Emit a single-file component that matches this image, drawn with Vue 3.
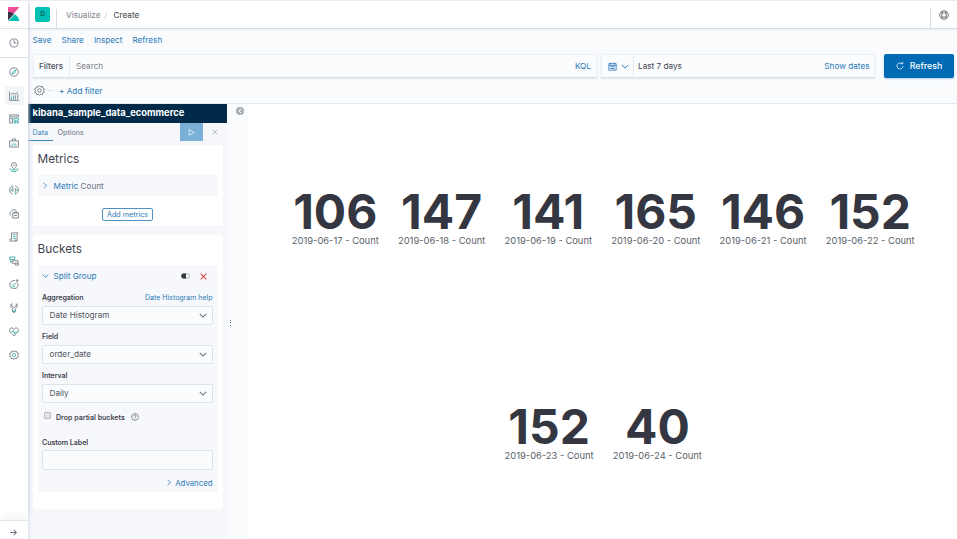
<script setup>
const nav = [
  { g: 'M8 1.2a6.8 6.8 0 1 0 0 13.6A6.8 6.8 0 0 0 8 1.2z', t: 'M11.4 4.6 9.4 9.2 4.6 11.4 6.7 6.8z' },
  { g: 'M1 1v14h14.500M10 14V7M14 14V5M3.500 5.500 7 3.500l3.500 1.500L14 1.500', t: 'M4 14V9M7 14V7', active: true },
  { g: 'M1 1.5h14v3H1zM1 7h4.5v7.5H1z', t: 'M8 7h7v3H8zM8 12h3v2.5H8zM13 12h2v2.5h-2z' },
  { g: 'M1 4.5h14v10H1zM5.5 4.5V1.5h5v3', t: 'M5 12.5V9M8 12.5V7.5M11 12.5V9' },
  { g: 'M8 11C5.500 8.500 4 7 4 5a4 4 0 1 1 8 0c0 2-1.500 3.500-4 6zM6.500 5h3', t: 'M3.500 9.500 1.500 12l3 3h7l3-3-2-2.500M4 12.500h8' },
  { g: 'M6 1.500C3 2 1 5 1 8s2 6 5 6.500M10 14.500c3-.5 5-3.500 5-6.500s-2-6-5-6.500M6 5v6M10 5v6', t: 'M6 1.500V5M10 11v3.500M3.500 6v4M12.500 6v4' },
  { g: 'M3 10.500A4 4 0 0 1 3.500 4 4.500 4.500 0 0 1 12 4M6 6.500h9v8H6zM8 6.500V5h5v1.500M8 10.500h5', t: 'M3 12.500h1' },
  { g: 'M4 1.500h10.500M4 1.500v10H1.500v3h9.500v-3M13 1.500v12c0 1.500-2 1.500-2 0', t: 'M6.500 4.500h4M6.500 7.500h4M6.500 10.500h4' },
  { g: 'M5 7.500h9.500v4H5zM10 11.500v3h5v-3', t: 'M1 1.500h8.500v4H1zM2.500 5.500v4H5' },
  { g: 'M14.500 7.500a6.700 6.700 0 1 1-5-5M13 7V1M10.700 3.300 13 1l2.300 2.300', t: 'M4.500 8 7 10.500 11 6M4 12.500h6' },
  { g: 'M4.500 1C2 3 2 7 6 9.500v4c0 2 4 2 4 0v-4C14 7 14 3 11.500 1v4L8 7.500 4.500 5z', t: 'M6 11v3h4v-3' },
  { g: 'M2 8C-.5 5 1.500 1.500 4.500 1.500c2 0 3 1.500 3.500 2 .5-.5 1.500-2 3.500-2C14.500 1.500 16.500 5 14 8M4 10.500l4 4 4-4', t: 'M1 8.500h4L7 5.500l2 6 1.500-3H15' },
  { g: 'M8 1l1.700 1.600 2.400-.5.6 2.300 2.200 1L14 8l.9 2.600-2.200 1-.6 2.300-2.400-.5L8 15l-1.700-1.600-2.400.5-.6-2.300-2.200-1L2 8l-.9-2.600 2.200-1 .6-2.300 2.400.5z', t: 'M8 5.500a2.500 2.500 0 1 0 0 5 2.500 2.500 0 0 0 0-5z' },
]
const menu = ['Save', 'Share', 'Inspect', 'Refresh']
const selects = [
  { label: 'Aggregation', value: 'Date Histogram', help: 'Date Histogram help' },
  { label: 'Field', value: 'order_date' },
  { label: 'Interval', value: 'Daily' },
]
const rows = [
  [
    { n: 106, d: '2019-06-17' },
    { n: 147, d: '2019-06-18' },
    { n: 141, d: '2019-06-19' },
    { n: 165, d: '2019-06-20' },
    { n: 146, d: '2019-06-21' },
    { n: 152, d: '2019-06-22' },
  ],
  [
    { n: 152, d: '2019-06-23' },
    { n: 40, d: '2019-06-24' },
  ],
]
</script>

<template>
  <div class="app">
    <aside class="side">
      <div class="logo">
        <svg width="12" height="14" viewBox="0 0 12 14">
          <path d="M0 0h11.500L0 13z" fill="#f04e98" />
          <path d="M0 5c2.200 0 4.300.6 6 1.700L0 13.500z" fill="#343741" />
          <path d="M6.500 7.200c2.600 1.500 4.400 3.900 5 6.800H.5z" fill="#00bfb3" />
        </svg>
      </div>
      <div class="recent">
        <svg class="ico" viewBox="0 0 16 16"><circle cx="8" cy="8" r="6.500" /><path d="M8 3.500V8h4" /></svg>
      </div>
      <nav class="nav">
        <div v-for="(i, k) in nav" :key="k" class="item">
          <span class="tile" :class="{ active: i.active }">
            <svg class="ico" viewBox="0 0 16 16"><path :d="i.g" /><path class="teal" :d="i.t" /></svg>
          </span>
        </div>
      </nav>
      <div class="expand">
        <svg class="ico" viewBox="0 0 16 16"><path d="M2 8h11M8.500 3.500 13 8l-4.500 4.500" /></svg>
      </div>
    </aside>

    <div class="page">
      <header class="head">
        <span class="space">D</span>
        <span class="rule"></span>
        <span class="crumb">Visualize</span>
        <span class="slash">/</span>
        <span class="crumb now">Create</span>
        <span class="rule right"></span>
        <svg class="helpicon" viewBox="0 0 16 16"><circle cx="8" cy="8" r="6.800" /><rect x="4.500" y="4.500" width="7" height="7" rx="2" /><path d="M5 2.500v3M11 2.500v3M5 10.500v3M11 10.500v3" /></svg>
      </header>

      <section class="query">
        <div class="menu"><a v-for="m in menu" :key="m">{{ m }}</a></div>
        <div class="bar">
          <div class="search">
            <span class="filters">Filters</span>
            <span class="ph">Search</span>
            <span class="kql">KQL</span>
          </div>
          <div class="dates">
            <span class="cal">
              <svg class="calico" viewBox="0 0 16 16"><path d="M1.500 3h13v11.500h-13zM1.500 6h13M4.500 1v3M11.500 1v3M4 8.500h8M4 11.500h8" /></svg>
              <svg class="chev" viewBox="0 0 10 6"><path d="M1 1l4 4 4-4" /></svg>
            </span>
            <span class="range">Last 7 days</span>
            <span class="show">Show dates</span>
          </div>
          <button class="refresh">
            <svg viewBox="0 0 16 16"><path d="M12 3.500A6 6 0 1 0 14 8M9 3.500h4.500V0" /></svg>
            <span>Refresh</span>
          </button>
        </div>
        <div class="filterrow">
          <svg class="gear" viewBox="0 0 16 16"><path :d="nav[12].g" /><circle cx="8" cy="8" r="2.500" /></svg>
          <span class="dash"></span>
          <a>+ Add filter</a>
        </div>
      </section>

      <div class="work">
        <section class="editor">
          <div class="title">kibana_sample_data_ecommerce</div>
          <div class="tabs">
            <span class="tab on">Data</span>
            <span class="tab">Options</span>
            <span class="play"><svg viewBox="0 0 10 10"><path d="M1.500 1v8L9 5z" /></svg></span>
            <svg class="close" viewBox="0 0 10 10"><path d="M1 1l8 8M9 1l-8 8" /></svg>
          </div>
          <div class="card metrics">
            <h2>Metrics</h2>
            <div class="metric">
              <svg class="right-chev" viewBox="0 0 6 10"><path d="M1 1l4 4-4 4" /></svg>
              <span><b>Metric</b> Count</span>
            </div>
            <button class="add">Add metrics</button>
          </div>
          <div class="card buckets">
            <h2>Buckets</h2>
            <div class="group">
              <div class="ghead">
                <svg class="chev" viewBox="0 0 10 6"><path d="M1 1l4 4 4-4" /></svg>
                <span class="gname">Split Group</span>
                <span class="tools">
                  <svg class="toggle" viewBox="0 0 16 10"><rect x="1" y="1" width="14" height="8" rx="4" fill="#fff" stroke="#69707d" /><path d="M9 .5H5a4.500 4.500 0 0 0 0 9h4z" fill="#343741" /></svg>
                  <svg class="remove" viewBox="0 0 10 10"><path d="M1 1l8 8M9 1l-8 8" /></svg>
                </span>
              </div>
              <div v-for="s in selects" :key="s.label" class="field">
                <div class="lab"><span>{{ s.label }}</span><a v-if="s.help">{{ s.help }}</a></div>
                <div class="select"><span>{{ s.value }}</span><svg class="chev grey" viewBox="0 0 10 6"><path d="M1 1l4 4 4-4" /></svg></div>
              </div>
              <div class="drop">
                <span class="check"></span>
                <span>Drop partial buckets</span>
                <svg viewBox="0 0 16 16"><circle cx="8" cy="8" r="6.800" /><path d="M5.800 6.500c0-3 4.400-3 4.400-.3C10.200 8 8 7.800 8 10M8 11.300v1.300" /></svg>
              </div>
              <div class="lab custom"><span>Custom Label</span></div>
              <div class="input"></div>
              <div class="adv"><svg class="right-chev" viewBox="0 0 6 10"><path d="M1 1l4 4-4 4" /></svg><span>Advanced</span></div>
            </div>
          </div>
        </section>
        <div class="gutter">
          <svg class="collapse" viewBox="0 0 16 16"><circle cx="8" cy="8" r="8" fill="#a9adb5" /><path d="M10 4 6 8l4 4" fill="none" stroke="#fff" stroke-width="2" /></svg>
          <span class="grip"><i></i><i></i><i></i></span>
        </div>
        <main class="vis">
          <div v-for="(r, k) in rows" :key="k" class="row">
            <div v-for="m in r" :key="m.d" class="num">
              <strong>{{ m.n }}</strong>
              <span>{{ m.d }} - Count</span>
            </div>
          </div>
        </main>
      </div>
    </div>
  </div>
</template>

<style>
body { background: #fff; overflow: hidden; }
</style>

<style scoped>
* { box-sizing: border-box; }
.app { display: flex; width: 957px; height: 539px; font-family: Inter, sans-serif; font-size: 8.200px; color: #3f434d; border-top: 1px solid #ebecee; overflow: hidden; }
svg { fill: none; stroke: #69707d; flex: none; display: block; }
a { color: #2a78b8; }
button { font: inherit; padding: 0; }
.side { width: 28px; flex: none; display: flex; flex-direction: column; background: #fff; box-shadow: 1px 0 3px #c8d0de; z-index: 1; }
.logo { height: 28px; padding: 6px 0 0 8px; border-bottom: 1px solid #dfe3eb; }
.logo svg { stroke: none; }
.recent { height: 29px; padding: 9px 0 0 8.500px; border-bottom: 1px solid #d9dee8; }
.ico { width: 10px; height: 10px; stroke-width: 1.300; }
.teal { stroke: #35aaa2; }
.nav { flex: 1; padding-top: 2.500px; }
.item { height: 23.580px; display: flex; align-items: center; justify-content: center; }
.tile { width: 19px; height: 19px; border-radius: 2px; display: flex; align-items: center; justify-content: center; }
.tile.active { background: #f3f5f9; }
.expand { height: 19px; padding: 7px 0 0 9px; border-top: 1px solid #e3e7ee; box-shadow: 0 -5px 8px #f5f6f9; }
.expand .ico { width: 9px; height: 9px; stroke-width: 1.800; }

.page { flex: 1; min-width: 0; display: flex; flex-direction: column; }
.head { height: 28px; flex: none; display: flex; align-items: center; border-bottom: 1px solid #d5dbe6; box-shadow: 0 1px 2px #e3e8f0; padding: 0 8px 0 7px; background: #fff; position: relative; }
.space { width: 15px; height: 15px; border-radius: 2px; background: #00bfb3; color: #075d5d; font-size: 6.500px; font-weight: 600; text-align: center; line-height: 14px; }
.rule { width: 1px; height: 19px; background: #d5dbe6; margin: 8px 9px 0 6px; }
.rule.right { margin: 8px 8px 0 auto; }
.crumb { color: #7b818c; }
.crumb.now { color: #3f434d; }
.slash { color: #c4c9d3; margin: 0 6px 0 4px; }
.helpicon { width: 10px; height: 10px; stroke-width: 1.300; stroke: #4b505b; }

.query { height: 75px; flex: none; background: #fafbfd; border-bottom: 1px solid #e4e8f0; padding: 0 3px 0 4.500px; }
.menu { height: 25px; display: flex; gap: 10px; line-height: 23.500px; }
.bar { height: 24px; display: flex; }
.search, .dates { height: 24px; display: flex; align-items: center; background: #fbfcfd; border: 1px solid #edf0f5; border-bottom-color: #d8dde7; box-shadow: 0 1px 2px #e2e6ee; }
.search { width: 564.500px; margin-right: 4px; }
.filters { width: 36px; line-height: 22px; text-align: center; font-weight: 500; border-right: 1px solid #e7eaf1; color: #4a4f5a; }
.ph { margin-left: 6.500px; color: #7b818c; }
.kql { margin-left: auto; margin-right: 5px; color: #2a78b8; }
.dates { width: 274px; margin-right: 9px; }
.cal { width: 31.500px; height: 22px; display: flex; align-items: center; gap: 4px; padding-left: 5.500px; border-right: 1px solid #e7eaf1; }
.calico { width: 9px; height: 9px; stroke: #2a78b8; stroke-width: 1.500; }
.chev { width: 8px; height: 5px; stroke: #2a78b8; stroke-width: 1.200; }
.chev.grey { stroke: #69707d; stroke-width: 1.300; }
.range { margin-left: 4.500px; }
.show { margin-left: auto; margin-right: 4.500px; color: #2a78b8; }
.refresh { width: 70px; height: 24px; background: #006bb4; border: 0; border-radius: 2px; color: #fff; font-size: 8.800px; font-weight: 500; display: flex; align-items: center; justify-content: center; gap: 6px; box-shadow: 0 1px 2px #b4cce3; line-height: 22px; padding-bottom: 1px; }
.refresh svg { width: 8px; height: 8px; stroke: #fff; stroke-width: 1.500; }
.filterrow { display: flex; align-items: center; height: 25px; padding-left: 1.500px; }
.gear { width: 11px; height: 11px; stroke-width: 1.300; }
.dash { width: 6px; height: 1px; background: #e1e5ed; margin: 0 5px 0 3px; }

.work { flex: 1; min-height: 0; display: flex; }
.editor { width: 199px; flex: none; background: #f5f7fb; }
.title { height: 19px; background: #002a48; color: #fff; font-weight: 700; font-size: 9.400px; line-height: 18.500px; padding-left: 4.500px; }
.tabs { height: 18px; display: flex; align-items: stretch; font-size: 7.200px; color: #69707d; line-height: 19px; }
.tab { padding: 0 4.500px; }
.tab.on { color: #3a84be; box-shadow: inset 0 -1px #3a84be; width: 25px; }
.play { margin-left: auto; width: 23px; background: #7aafd6; display: flex; align-items: center; justify-content: center; }
.play svg { width: 7px; height: 7px; stroke: #fff; }
.close { width: 6px; height: 6px; margin: 6px 9px 0; stroke: #9aa0ab; stroke-width: 1.200; }
.card { width: 190px; margin-left: 4.500px; background: #fff; border-radius: 2px; padding: 0 5px; box-shadow: 0 0 2px #eef1f6; }
.metrics { margin-top: 4px; height: 81px; }
.buckets { margin-top: 9px; height: 273.500px; }
h2 { margin: 0; font-size: 11.800px; font-weight: 400; line-height: 28px; height: 30px; }
.metric { height: 21px; background: #f7f8fb; display: flex; align-items: center; gap: 6.500px; padding: 0 0 0 5.500px; color: #69707d; border-radius: 2px; }
.metric b { font-weight: 400; color: #2a78b8; }
.right-chev { width: 4px; height: 7px; stroke: #2a78b8; stroke-width: 1.200; }
.add { display: block; width: 51px; height: 13px; margin: 12px auto 0; background: #fff; border: 1px solid #4e92c6; border-radius: 2px; color: #2a78b8; font-size: 7.200px; line-height: 12px; }
.group { height: 227px; background: #f7f8fb; padding: 0 5px 0 4.500px; border-radius: 2px; }
.ghead { height: 22px; display: flex; align-items: center; color: #2a78b8; }
.ghead .chev { width: 7px; height: 4px; }
.gname { margin-left: 4.500px; }
.tools { margin-left: auto; display: flex; align-items: center; gap: 10px; padding-right: 6px; }
.toggle { width: 9px; height: 6px; stroke: none; }
.remove, .remove path { width: 7px; height: 7px; stroke: #dc4a46; stroke-width: 1.500; }
.field { height: 39px; }
.lab { height: 19px; display: flex; justify-content: space-between; font-size: 7.050px; font-weight: 600; line-height: 21px; letter-spacing: -0.050px; }
.lab a { font-weight: 400; font-size: 7px; letter-spacing: 0; }
.select { height: 19px; border: 1px solid #dde2ec; background: #fbfcfd; border-radius: 2px; padding: 0 5px 0 6.500px; display: flex; align-items: center; justify-content: space-between; color: #50555f; line-height: 16px; }
.select span { padding-bottom: 1px; }
.drop { display: flex; align-items: center; height: 26px; font-size: 7.050px; font-weight: 600; padding-left: 2px; }
.check { width: 7px; height: 7px; border: 1px solid #b8bbc1; background: #e3e4e6; border-radius: 1px; margin: -3px 5px 0 0; }
.drop svg { width: 8px; height: 8px; stroke-width: 1.500; margin-left: 6px; }
.custom { margin-top: 3px; height: 17px; line-height: 19px; }
.input { height: 20px; border: 1px solid #dde2ec; background: #fbfcfd; border-radius: 2px; }
.adv { display: flex; justify-content: flex-end; align-items: center; gap: 4px; height: 25px; color: #2a78b8; font-size: 7.800px; }
.gutter { width: 21px; flex: none; background: #fafbfd; display: flex; flex-direction: column; }
.collapse { width: 8px; height: 8px; margin: 3px 0 0 9px; stroke: none; }
.grip { display: flex; flex-direction: column; gap: 1.500px; margin: 204.500px 0 0 2.500px; }
.grip i { width: 1px; height: 1px; background: #69707d; }
.vis { flex: 1; padding-top: 83px; display: flex; flex-direction: column; background: #fff; }
.row { display: flex; flex: none; justify-content: center; gap: 19.200px; height: 215px; padding-left: 1.500px; }
.num { display: flex; flex-direction: column; align-items: center; }
.num strong { font-size: 48px; line-height: 50px; font-weight: 700; height: 48px; color: #343741; }
.num span { font-size: 9.400px; line-height: 11px; color: #5a5f69; white-space: nowrap; }
</style>
